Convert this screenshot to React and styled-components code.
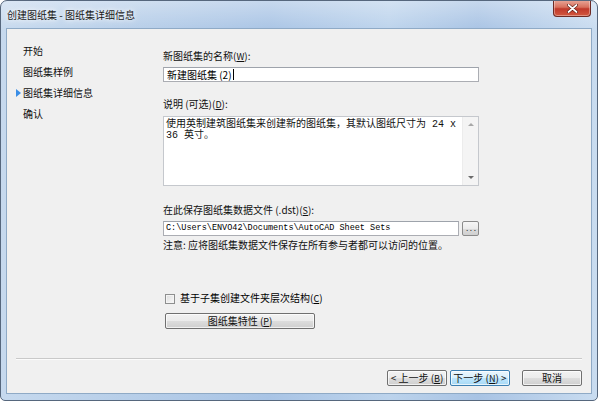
import React from 'react';
import styled, { createGlobalStyle, css } from 'styled-components';

const GlobalStyle = createGlobalStyle`
  html, body {
    margin: 0;
    padding: 0;
    background: #ffffff;
  }
  body {
    font-family: "Noto Sans CJK SC", "Liberation Sans", sans-serif;
    font-size: 10px;
    color: #000;
  }
`;

const Window = styled.div`
  width: 598px;
  height: 401px;
  box-sizing: border-box;
  border: 1px solid #56677d;
  border-radius: 7px 7px 5px 5px;
  background:
    linear-gradient(to bottom, rgba(255, 255, 255, 0.35), rgba(255, 255, 255, 0) 30px),
    linear-gradient(to right, #c6d9ee 0%, #b8cfe9 20%, #a9c4e5 45%, #bcd3ec 65%, #a8c3e4 80%, #c9dcf0 100%);
  display: flex;
  flex-direction: column;
  padding: 0 5px 6px 5px;
  overflow: hidden;
`;

const TitleBar = styled.div`
  height: 27px;
  display: flex;
  align-items: flex-start;
  justify-content: space-between;
`;

const Title = styled.span`
  margin: 8px 0 0 1px;
  font-size: 10px;
  line-height: 12px;
  color: #1a1a1a;
  text-shadow: 0 0 4px rgba(255, 255, 255, 0.9), 0 0 8px rgba(255, 255, 255, 0.8);
`;

const CloseButton = styled.div`
  width: 38px;
  height: 17px;
  margin-top: -1px;
  margin-right: 1px;
  box-sizing: border-box;
  border: 1px solid #6d2a24;
  border-top: none;
  border-radius: 0 0 4px 4px;
  background: linear-gradient(to bottom, #e9a99b 0%, #d8705d 45%, #c0392b 55%, #d2583f 100%);
  box-shadow: inset 0 0 0 1px rgba(255, 255, 255, 0.35);
  display: flex;
  align-items: center;
  justify-content: center;
`;

const Client = styled.div`
  flex: 1;
  box-sizing: border-box;
  border: 1px solid #8faac6;
  background: #f0f0f0;
  display: flex;
  flex-direction: column;
`;

const Body = styled.div`
  flex: 1;
  display: flex;
`;

const Nav = styled.ul`
  list-style: none;
  margin: 0;
  padding: 11px 0 0 0;
  width: 156px;
  flex: none;
`;

const NavItem = styled.li`
  position: relative;
  height: 21px;
  line-height: 21px;
  padding-left: 16px;
  font-size: 10px;
  color: #111;
  ${(p) =>
    p.$active &&
    css`
      &::before {
        content: '';
        position: absolute;
        left: 9px;
        top: 7px;
        border-left: 5px solid #3a8ee6;
        border-top: 4px solid transparent;
        border-bottom: 4px solid transparent;
      }
    `}
`;

const Panel = styled.div`
  width: 316px;
  padding-top: 20px;
  display: flex;
  flex-direction: column;
`;

const Label = styled.div`
  font-size: 10px;
  line-height: 14px;
  margin-top: ${(p) => p.$gap || 0}px;
  color: #111;
  white-space: nowrap;
`;

const Key = styled.span`
  text-decoration: underline;
  font-size: 9px;
`;

const TextInput = styled.div`
  margin-top: 3px;
  height: 15px;
  box-sizing: border-box;
  border: 1px solid #abadb3;
  border-top-color: #9ea3ab;
  background: #fff;
  padding: 0 3px;
  font-size: 10px;
  line-height: 13px;
  display: flex;
  align-items: center;
`;

const Caret = styled.span`
  display: inline-block;
  width: 1px;
  height: 11px;
  background: #000;
  margin-left: 1px;
`;

const TextArea = styled.div`
  margin-top: 4px;
  height: 70px;
  box-sizing: border-box;
  border: 1px solid #c5c8cd;
  background: #fff;
  display: flex;
`;

const AreaText = styled.div`
  flex: 1;
  padding: 2px 0 0 2px;
  font-family: "Liberation Mono", "Noto Sans CJK SC", monospace;
  font-size: 10px;
  line-height: 11px;
  color: #111;
`;

const ScrollBar = styled.div`
  width: 15px;
  flex: none;
  background: #f4f4f4;
  border-left: 1px solid #ececec;
  display: flex;
  flex-direction: column;
  justify-content: space-between;
  align-items: center;
  padding: 6px 0;
`;

const Arrow = styled.div`
  width: 0;
  height: 0;
  border-left: 3px solid transparent;
  border-right: 3px solid transparent;
  ${(p) =>
    p.$down
      ? css`border-top: 3px solid #6b6b6b;`
      : css`border-bottom: 3px solid #a8a8a8;`}
`;

const PathRow = styled.div`
  margin-top: 3px;
  display: flex;
  gap: 3px;
  height: 15px;
`;

const PathInput = styled(TextInput)`
  margin-top: 0;
  flex: 1;
  font-family: "Liberation Mono", monospace;
  font-size: 8.5px;
  padding-left: 2px;
`;

const Browse = styled.div`
  width: 17px;
  box-sizing: border-box;
  border: 1px solid #8b8b8b;
  border-radius: 2px;
  background: linear-gradient(to bottom, #f6f6f6 0%, #ebebeb 50%, #dcdcdc 51%, #d0d0d0 100%);
  font-family: "Liberation Mono", monospace;
  font-size: 8px;
  line-height: 14px;
  text-align: center;
  color: #333;
  letter-spacing: -1px;
`;

const CheckRow = styled.label`
  margin-top: 39px;
  display: flex;
  align-items: center;
  gap: 5px;
  padding-left: 2px;
  font-size: 10px;
  line-height: 14px;
`;

const CheckBox = styled.span`
  width: 10px;
  height: 10px;
  box-sizing: border-box;
  border: 1px solid #8e8f8f;
  background: linear-gradient(135deg, #dcdcdc, #fafafa);
  box-shadow: inset 0 0 0 1px #f4f4f4;
`;

const Button = styled.div`
  height: 16px;
  box-sizing: border-box;
  border: 1px solid #707070;
  border-radius: 2px;
  background: linear-gradient(to bottom, #f2f2f2 0%, #ebebeb 50%, #dddddd 51%, #cfcfcf 100%);
  box-shadow: inset 0 0 0 1px rgba(255, 255, 255, 0.7);
  font-size: 10px;
  line-height: 14px;
  text-align: center;
  color: #111;
  white-space: nowrap;
  width: ${(p) => p.$w || 60}px;
  ${(p) =>
    p.$focused &&
    css`
      border-color: #3c7fb1;
      background: linear-gradient(to bottom, #eaf6fd 0%, #d9f0fc 50%, #bee6fd 51%, #a7d9f5 100%);
    `}
`;

const PropsButton = styled(Button)`
  margin-top: 7px;
  margin-left: 2px;
`;

const Footer = styled.div`
  padding: 0 9px 7px 9px;
`;

const Separator = styled.div`
  height: 1px;
  background: #c9c9c9;
  border-bottom: 1px solid #fbfbfb;
`;

const ButtonRow = styled.div`
  margin-top: 10px;
  display: flex;
  justify-content: flex-end;
  gap: 3px;
`;

const CancelButton = styled(Button)`
  margin-left: 9px;
`;

export default function App() {
  return (
    <>
      <GlobalStyle />
      <Window>
        <TitleBar>
          <Title>创建图纸集 - 图纸集详细信息</Title>
          <CloseButton>
            <svg width="11" height="9" viewBox="0 0 11 9">
              <path d="M1.5 1 L9.5 8 M9.5 1 L1.5 8" stroke="#5a1a12" strokeWidth="3" strokeLinecap="round" />
              <path d="M1.5 1 L9.5 8 M9.5 1 L1.5 8" stroke="#ffffff" strokeWidth="1.7" strokeLinecap="round" />
            </svg>
          </CloseButton>
        </TitleBar>
        <Client>
          <Body>
            <Nav>
              <NavItem>开始</NavItem>
              <NavItem>图纸集样例</NavItem>
              <NavItem $active>图纸集详细信息</NavItem>
              <NavItem>确认</NavItem>
            </Nav>
            <Panel>
              <Label>新图纸集的名称(<Key>W</Key>):</Label>
              <TextInput>
                新建图纸集 (2)<Caret />
              </TextInput>
              <Label $gap={15}>说明 (可选)(<Key>D</Key>):</Label>
              <TextArea>
                <AreaText>使用英制建筑图纸集来创建新的图纸集，其默认图纸尺寸为 24 x 36 英寸。</AreaText>
                <ScrollBar>
                  <Arrow />
                  <Arrow $down />
                </ScrollBar>
              </TextArea>
              <Label $gap={17}>在此保存图纸集数据文件 (.dst)(<Key>S</Key>):</Label>
              <PathRow>
                <PathInput>C:\Users\ENVO42\Documents\AutoCAD Sheet Sets</PathInput>
                <Browse>...</Browse>
              </PathRow>
              <Label $gap={2}>注意: 应将图纸集数据文件保存在所有参与者都可以访问的位置。</Label>
              <CheckRow>
                <CheckBox />
                <span>基于子集创建文件夹层次结构(<Key>C</Key>)</span>
              </CheckRow>
              <PropsButton $w={150}>图纸集特性 (<Key>P</Key>)</PropsButton>
            </Panel>
          </Body>
          <Footer>
            <Separator />
            <ButtonRow>
              <Button>&lt; 上一步 (<Key>B</Key>)</Button>
              <Button $focused>下一步 (<Key>N</Key>) &gt;</Button>
              <CancelButton>取消</CancelButton>
            </ButtonRow>
          </Footer>
        </Client>
      </Window>
    </>
  );
}
